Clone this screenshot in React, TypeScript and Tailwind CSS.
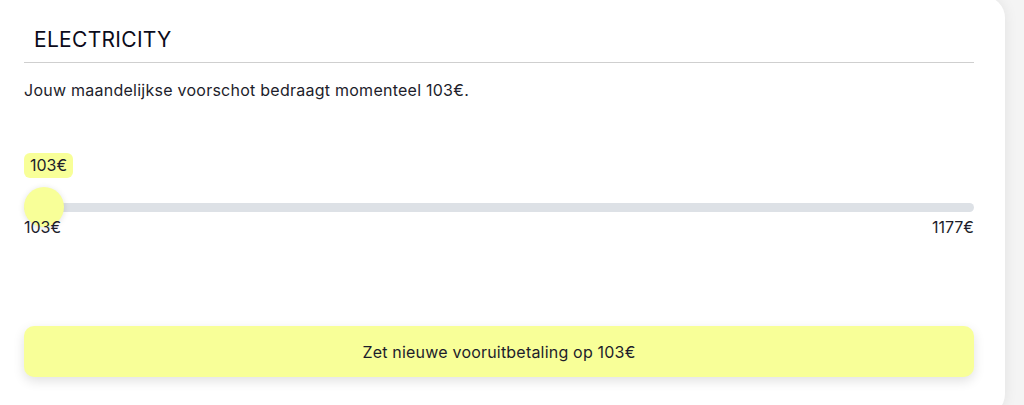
import React from "react";

export default function App() {
  return (
    <div className="w-[1024px] h-[405px] overflow-hidden bg-[#f4f4f4] relative" style={{ fontFamily: "Inter, 'Noto Sans', sans-serif" }}>
      <div className="w-[1005px] h-[420px] -mt-[4px] bg-white rounded-r-[22px] shadow-[0_0_14px_rgba(0,0,0,0.08)] pl-[24px] pr-[31px] pt-[4px] text-[#1d1d2b]">
        <div className="pt-[26px] pl-[10px] pb-[8px] border-b border-[#cfcfcf] text-[21px] leading-[28px] tracking-[0.3px] text-[#0b0b1a]">
          ELECTRICITY
        </div>
        <p className="mt-[16px] text-[16px] leading-[22px] tracking-[0.25px]">Jouw maandelijkse voorschot bedraagt momenteel 103€.</p>
        <div className="mt-[52px]">
          <div className="inline-block bg-[#f8ff98] rounded-[6px] px-[6px] text-[16px] leading-[25px]">103€</div>
          <div className="relative h-[40px] mt-[9px] flex items-center">
            <div className="w-full h-[9px] rounded-full bg-[#dde1e6]" />
            <div className="absolute left-0 top-0 w-[40px] h-[40px] rounded-full bg-[#f8ff98] shadow-[0_1px_6px_rgba(0,0,0,0.12)]" />
          </div>
          <div className="relative z-10 flex justify-between text-[16px] leading-[20px] -mt-[10px]">
            <span>103€</span>
            <span>1177€</span>
          </div>
        </div>
        <button className="mt-[89px] w-full h-[51px] rounded-[10px] bg-[#f8ff98] shadow-[0_4px_12px_rgba(0,0,0,0.12)] text-[16px] tracking-[0.2px] text-[#1d1d2b]">
          Zet nieuwe vooruitbetaling op 103€
        </button>
      </div>
    </div>
  );
}
